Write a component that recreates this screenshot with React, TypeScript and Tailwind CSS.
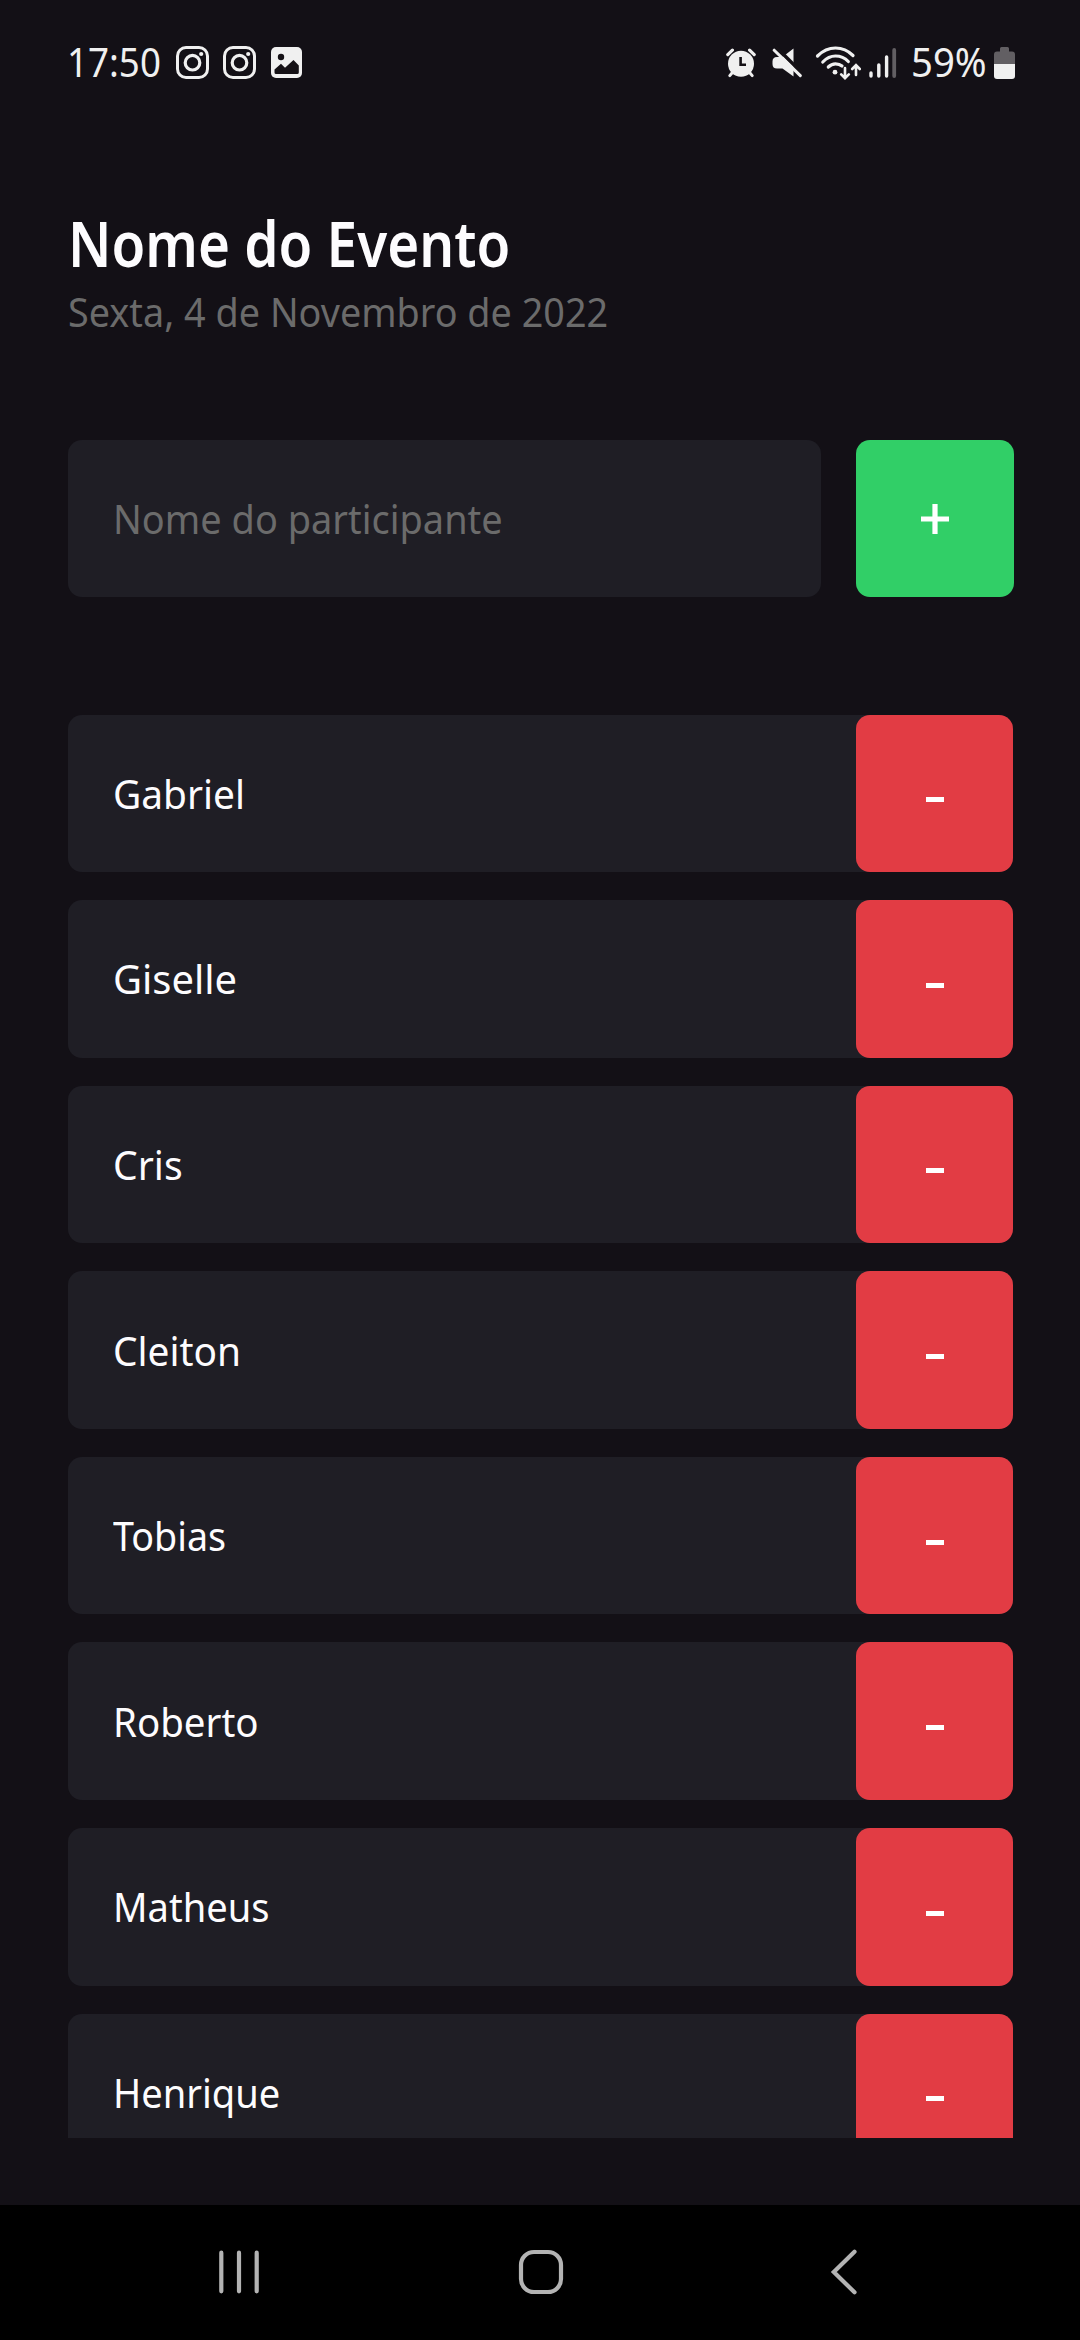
import React from "react";

const participants = [
  { name: "Gabriel", fit: "scale-x-[0.96]" },
  { name: "Giselle", fit: "scale-x-[0.985]" },
  { name: "Cris", fit: "scale-x-[0.965]" },
  { name: "Cleiton", fit: "scale-x-[0.96]" },
  { name: "Tobias", fit: "scale-x-[0.93]" },
  { name: "Roberto", fit: "scale-x-[0.95]" },
  { name: "Matheus", fit: "scale-x-[0.94]" },
  { name: "Henrique", fit: "scale-x-[0.94]" },
];

function InstagramIcon() {
  return (
    <svg className="h-[33px] w-[33px]" viewBox="0 0 33 33" fill="none" stroke="#f0f0f0">
      <rect x="1.5" y="1.5" width="30" height="30" rx="8.5" strokeWidth="3" />
      <circle cx="16.5" cy="16.7" r="7.3" strokeWidth="3.2" />
      <circle cx="25.2" cy="8" r="2.1" fill="#f0f0f0" stroke="none" />
    </svg>
  );
}

function PictureIcon() {
  return (
    <svg className="h-[31px] w-[31px]" viewBox="0 0 31 31">
      <rect width="31" height="31" rx="5" fill="#f0f0f0" />
      <circle cx="10" cy="10" r="3.2" fill="#151116" />
      <path d="M3.5 25.5V22.5L10 16.8L14 20.8L22.5 13L27.8 18.5V25.5Q27.8 27 26.3 27H5Q3.5 27 3.5 25.5Z" fill="#151116" />
    </svg>
  );
}

function AlarmIcon() {
  return (
    <svg className="h-[30px] w-[30px]" viewBox="0 0 30 30" fill="none" stroke="#f0f0f0" strokeLinecap="round">
      <circle cx="15" cy="15.7" r="13" fill="#f0f0f0" stroke="none" />
      <path d="M1.8 6.6L6.4 2.2M28.2 6.6L23.6 2.2" strokeWidth="3.2" />
      <path d="M6 25L3.8 27.6M24 25L26.2 27.6" strokeWidth="3" />
      <path d="M14.6 9V16.8H20" stroke="#151116" strokeWidth="2.6" strokeLinecap="butt" />
    </svg>
  );
}

function MuteIcon() {
  return (
    <svg className="h-[31px] w-[31px]" viewBox="0 0 31 31">
      <path d="M22.5 1.5V29.5L11.5 21.5H6Q1.5 21.5 1.5 17V14.5Q1.5 10 6 10H11.5Z" fill="#f0f0f0" />
      <path d="M5.5 0.5L32 27" stroke="#151116" strokeWidth="3.5" />
      <path d="M3.2 3.2L29.3 28.6" stroke="#f0f0f0" strokeWidth="3" strokeLinecap="round" />
    </svg>
  );
}

function WifiIcon() {
  return (
    <svg className="h-[34px] w-[46px]" viewBox="0 0 46 34" fill="none" stroke="#f0f0f0" strokeLinecap="round">
      <path d="M2.5 10Q10.5 2 20.5 2Q30.5 2 38 9.5" strokeWidth="3.2" />
      <path d="M7.8 16Q13.5 10 20.5 10Q28 10 33.3 15.5" strokeWidth="3.2" />
      <path d="M13.3 21Q16.5 17.8 20.5 17.8Q24.5 17.8 27 20" strokeWidth="3.2" />
      <circle cx="20" cy="26.2" r="2.4" fill="#f0f0f0" stroke="none" />
      <path d="M30 22V32M26.2 28.4L30 32.2L33.8 28.4" strokeWidth="2.6" />
      <path d="M41 29V19.5M37.2 23L41 19.2L44.8 23" strokeWidth="2.6" />
    </svg>
  );
}

function SignalIcon() {
  return (
    <svg className="h-[30px] w-[28px]" viewBox="0 0 28 30" strokeWidth="3.4" stroke="#f0f0f0" strokeLinecap="round">
      <path d="M2 25V28M9.8 17V28M17.6 9V28" />
      <path d="M25.2 2V28" stroke="#625f63" strokeWidth="3.8" />
    </svg>
  );
}

function BatteryIcon() {
  return (
    <svg className="h-[32px] w-[21px]" viewBox="0 0 21 32">
      <path d="M6 4.5V1.5Q6 0 7.5 0H13.5Q15 0 15 1.5V4.5H18Q21 4.5 21 7.5V17H0V7.5Q0 4.5 3 4.5Z" fill="#625f63" />
      <path d="M0 17H21V29Q21 32 18 32H3Q0 32 0 29Z" fill="#f0f0f0" />
    </svg>
  );
}

function StatusBar() {
  return (
    <header className="flex h-[125px] shrink-0 items-center justify-between pr-[65px] pl-[67px] text-[39.5px] leading-none text-[#f0f0f0]">
      <div className="flex items-center">
        <div className="w-[109px]">
          <span className="inline-block origin-left scale-x-[0.93]">17:50</span>
        </div>
        <InstagramIcon />
        <div className="ml-[14px]"><InstagramIcon /></div>
        <div className="ml-[15px]"><PictureIcon /></div>
      </div>
      <div className="flex items-center">
        <AlarmIcon />
        <div className="ml-[15px]"><MuteIcon /></div>
        <div className="ml-[13px]"><WifiIcon /></div>
        <div className="ml-[8px]"><SignalIcon /></div>
        <div className="ml-[14px] w-[83px]">
          <span className="inline-block origin-left scale-x-[0.97]">59%</span>
        </div>
        <BatteryIcon />
      </div>
    </header>
  );
}

function NavigationBar() {
  return (
    <nav className="flex h-[135px] shrink-0 items-center bg-black pb-[1px] pl-[219px]">
      <svg className="h-[46px] w-[40px]" viewBox="0 0 40 46" stroke="#b3b3b3" strokeWidth="4.2" strokeLinecap="round">
        <path d="M2.3 3.7V42.3M20 3.7V42.3M37.7 3.7V42.3" />
      </svg>
      <svg className="ml-[259px] h-[46px] w-[46px]" viewBox="0 0 46 46" fill="none" stroke="#b3b3b3" strokeWidth="4.2">
        <rect x="3" y="3" width="40" height="40" rx="13" />
      </svg>
      <svg className="ml-[266px] h-[46px] w-[28px]" viewBox="0 0 28 46" fill="none" stroke="#b3b3b3" strokeWidth="4.2" strokeLinecap="round">
        <path d="M24.5 2.7L3.8 23L24.5 43.3" />
      </svg>
    </nav>
  );
}

export default function App() {
  return (
    <div className="flex h-[2340px] w-[1080px] flex-col overflow-hidden bg-[#131016] font-['Noto_Sans','Open_Sans',sans-serif]">
      <StatusBar />
      <main className="flex min-h-0 flex-1 flex-col pt-[76px] pr-[66px] pb-[67.5px] pl-[67.5px]">
        <h1 className="h-[86px] text-[62.5px] leading-[84px] font-semibold whitespace-nowrap text-[#fdfcfe]">
          <span className="inline-block origin-left scale-x-[0.877]">Nome do Evento</span>
        </h1>
        <p className="h-[50px] text-[40.5px] leading-[50px] whitespace-nowrap text-[#6b6b6b]">
          <span className="inline-block origin-left scale-x-[0.933]">Sexta, 4 de Novembro de 2022</span>
        </p>
        <div className="mt-[102.5px] flex h-[157.5px] shrink-0">
          <div className="flex flex-1 items-center rounded-[14px] bg-[#1f1e25] pt-[2px] pl-[45px] text-[40.5px] whitespace-nowrap text-[#6b6b6b]">
            <span className="inline-block origin-left scale-x-[0.937]">Nome do participante</span>
          </div>
          <button className="ml-[35px] flex w-[158px] items-center justify-center rounded-[14px] bg-[#31cf67] pt-[2px] text-white">
            <svg className="h-[30px] w-[28px]" viewBox="0 0 28 30" stroke="currentColor" strokeWidth="5.2">
              <path d="M14 0V30M0 15H28" />
            </svg>
          </button>
        </div>
        <ul className="mt-[117.5px] mr-[1px] flex min-h-0 flex-1 flex-col gap-[28.1px] overflow-hidden">
          {participants.map(({ name, fit }) => (
            <li key={name} className="flex h-[157.5px] shrink-0 items-center justify-between rounded-[14px] bg-[#1f1e25] pl-[45px] text-[40.5px] text-[#fdfcfe]">
              <span className={`inline-block origin-left pt-[2px] ${fit}`}>{name}</span>
              <button className="flex h-full w-[157px] items-center justify-center rounded-[14px] bg-[#e23c44] pt-[13px]">
                <span className="h-[5px] w-[18px] bg-white" />
              </button>
            </li>
          ))}
        </ul>
      </main>
      <NavigationBar />
    </div>
  );
}
